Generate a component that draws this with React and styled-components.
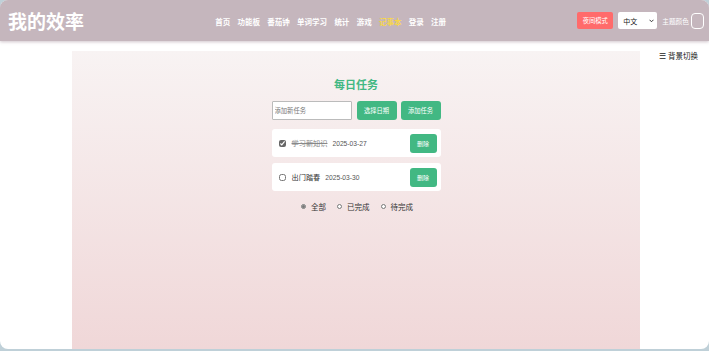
import { useState } from "react";
import styled, { createGlobalStyle } from "styled-components";

const GlobalStyle = createGlobalStyle`
  html, body {
    margin: 0;
    padding: 0;
    background: #bfd0d8;
  }
  body {
    font-family: "Noto Sans CJK SC", "Liberation Sans", sans-serif;
  }
`;

const tasks0 = [
  { id: 1, text: "学习新知识", date: "2025-03-27", done: true },
  { id: 2, text: "出门踏春", date: "2025-03-30", done: false },
];

const navItems = ["首页", "功能板", "番茄钟", "单词学习", "统计", "游戏", "记事本", "登录", "注册"];

const App = () => {
  const [tasks, setTasks] = useState(tasks0);
  const [filter, setFilter] = useState("all");

  const toggle = (id) => {
    setTasks(tasks.map((t) => (t.id === id ? { ...t, done: !t.done } : t)));
  };

  const shown = tasks.filter((t) =>
    filter === "all" ? true : filter === "done" ? t.done : !t.done
  );

  return (
    <Frame>
      <GlobalStyle />
      <Header>
        <Logo>我的效率</Logo>
        <Nav>
          {navItems.map((n) => (
            <NavLink key={n} $active={n === "记事本"}>
              {n}
            </NavLink>
          ))}
        </Nav>
        <Tools>
          <NightButton>夜间模式</NightButton>
          <SelectWrap>
            <LangSelect defaultValue="zh">
              <option value="zh">中文</option>
              <option value="en">English</option>
            </LangSelect>
            <Chevron viewBox="0 0 10 6">
              <path d="M1 1l4 4 4-4" fill="none" stroke="#222" strokeWidth="1.8" />
            </Chevron>
          </SelectWrap>
          <ThemeLabel>主题颜色</ThemeLabel>
          <Swatch />
        </Tools>
      </Header>
      <Body>
        <BgSwitch>☰ 背景切换</BgSwitch>
        <Panel>
          <Inner>
            <Title>每日任务</Title>
            <AddRow>
              <TaskInput placeholder="添加新任务" />
              <GreenButton>选择日期</GreenButton>
              <GreenButton>添加任务</GreenButton>
            </AddRow>
            <TaskList>
              {shown.map((t) => (
                <TaskCard key={t.id}>
                  <Check
                    type="checkbox"
                    checked={t.done}
                    onChange={() => toggle(t.id)}
                  />
                  <TaskText $done={t.done}>{t.text}</TaskText>
                  <TaskDate>{t.date}</TaskDate>
                  <DeleteButton
                    onClick={() => setTasks(tasks.filter((x) => x.id !== t.id))}
                  >
                    删除
                  </DeleteButton>
                </TaskCard>
              ))}
            </TaskList>
            <Filters>
              {[
                ["all", "全部"],
                ["done", "已完成"],
                ["todo", "待完成"],
              ].map(([v, label]) => (
                <FilterLabel key={v}>
                  <Radio
                    type="radio"
                    name="filter"
                    checked={filter === v}
                    onChange={() => setFilter(v)}
                  />
                  {label}
                </FilterLabel>
              ))}
            </Filters>
          </Inner>
        </Panel>
      </Body>
    </Frame>
  );
};

const Frame = styled.div`
  height: 349px;
  background: #fff;
  border-radius: 8px;
  overflow: hidden;
  display: flex;
  flex-direction: column;
`;

const Header = styled.header`
  height: 41px;
  flex-shrink: 0;
  background: #c5b6bd;
  display: flex;
  align-items: center;
  justify-content: space-between;
  padding: 0 5px 0 8px;
  box-shadow: 0 1px 3px rgba(120, 90, 110, 0.35);
  position: relative;
  z-index: 1;
`;

const Logo = styled.div`
  color: #fff;
  font-size: 19px;
  font-weight: 700;
`;

const Nav = styled.nav`
  display: flex;
  gap: 7.3px;
  padding-top: 1px;
`;

const NavLink = styled.span`
  font-size: 7.5px;
  font-weight: 600;
  color: ${(p) => (p.$active ? "#f7d64a" : "#fff")};
`;

const Tools = styled.div`
  display: flex;
  align-items: center;
`;

const NightButton = styled.button`
  width: 36px;
  height: 17px;
  padding: 0;
  border: none;
  border-radius: 2px;
  background: #ff6b6b;
  color: #fff;
  font-family: inherit;
  font-size: 6.3px;
  margin-right: 5px;
`;

const SelectWrap = styled.div`
  position: relative;
  margin-right: 5px;
`;

const LangSelect = styled.select`
  appearance: none;
  display: block;
  width: 39px;
  height: 17px;
  padding: 0 0 0 5px;
  border: none;
  border-radius: 2px;
  background: #fff;
  color: #222;
  font-family: inherit;
  font-size: 7px;
`;

const Chevron = styled.svg`
  position: absolute;
  right: 3px;
  top: 7px;
  width: 5px;
  height: 3.5px;
  pointer-events: none;
`;

const ThemeLabel = styled.span`
  font-size: 6.7px;
  color: #fff;
  margin-right: 2px;
`;

const Swatch = styled.div`
  width: 11px;
  height: 14px;
  border: 1.5px solid #fff;
  border-radius: 4px;
  background: #c5b6bd;
`;

const Body = styled.main`
  flex: 1;
  position: relative;
  padding: 10px 0 0 3px;
  display: flex;
  justify-content: center;
  min-height: 0;
`;

const BgSwitch = styled.div`
  position: absolute;
  top: 9px;
  right: 11px;
  font-size: 7.5px;
  color: #222;
`;

const Panel = styled.section`
  width: 568px;
  background: linear-gradient(to bottom, #f8f3f3, #f0d7d8);
  display: flex;
  justify-content: center;
  padding-top: 26px;
`;

const Inner = styled.div`
  width: 169px;
  display: flex;
  flex-direction: column;
  align-items: stretch;
`;

const Title = styled.h2`
  margin: 0 0 10px;
  text-align: center;
  font-size: 11px;
  line-height: 14px;
  font-weight: 700;
  color: #42b883;
`;

const AddRow = styled.div`
  display: flex;
  align-items: center;
  gap: 4px;
  height: 19px;
`;

const TaskInput = styled.input`
  width: 80px;
  height: 19px;
  box-sizing: border-box;
  border: 1px solid #bbb;
  border-radius: 1px;
  padding: 0 2px;
  font-family: inherit;
  font-size: 6.3px;
  background: #fff;
  margin-right: 1px;
  &::placeholder {
    color: #777;
  }
`;

const GreenButton = styled.button`
  width: 40px;
  height: 19px;
  padding: 0;
  border: none;
  border-radius: 3px;
  background: #42b883;
  color: #fff;
  font-family: inherit;
  font-size: 6.3px;
`;

const TaskList = styled.div`
  display: flex;
  flex-direction: column;
  gap: 6px;
  margin-top: 9px;
`;

const TaskCard = styled.div`
  height: 28px;
  background: #fff;
  border-radius: 3px;
  display: flex;
  align-items: center;
  padding: 0 4px 0 7px;
`;

const Check = styled.input`
  width: 7px;
  height: 7px;
  margin: 0 6px 0 0;
  accent-color: #666;
`;

const TaskText = styled.span`
  font-size: 7.2px;
  color: ${(p) => (p.$done ? "#888" : "#333")};
  text-decoration: ${(p) => (p.$done ? "line-through" : "none")};
  margin-right: 5px;
`;

const TaskDate = styled.span`
  font-family: "Liberation Sans", sans-serif;
  font-size: 6.7px;
  color: #555;
`;

const DeleteButton = styled.button`
  margin-left: auto;
  width: 27px;
  height: 19px;
  padding: 0;
  border: none;
  border-radius: 3px;
  background: #42b883;
  color: #fff;
  font-family: inherit;
  font-size: 6px;
`;

const Filters = styled.div`
  display: flex;
  justify-content: center;
  gap: 11px;
  margin-top: 10px;
  padding-left: 2px;
`;

const FilterLabel = styled.label`
  display: flex;
  align-items: center;
  font-size: 7.5px;
  color: #333;
`;

const Radio = styled.input`
  width: 5px;
  height: 5px;
  margin: 0 5px 0 0;
  accent-color: #777;
`;

export default App;
